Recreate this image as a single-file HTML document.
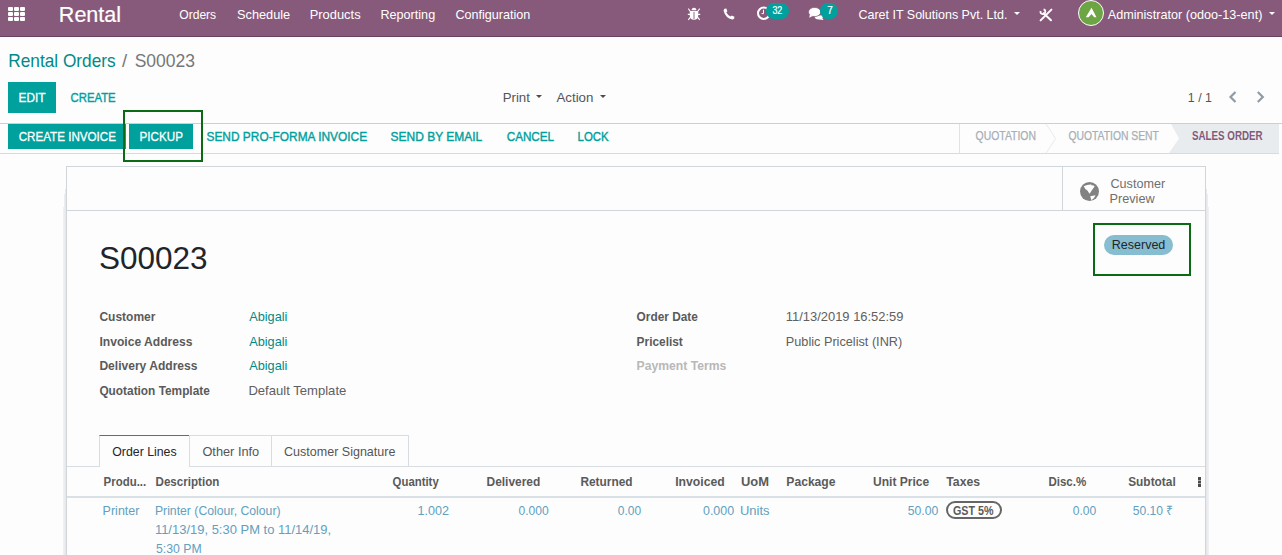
<!DOCTYPE html>
<html><head><meta charset="utf-8"><style>
html,body{margin:0;padding:0;width:1282px;height:555px;overflow:hidden;background:#fdfdfd;font-family:"Liberation Sans",sans-serif;position:relative}
.t{position:absolute;white-space:nowrap;transform-origin:0 0}
.r{position:absolute}
</style></head><body>
<!-- navbar -->
<div class="r" style="left:0;top:0;width:1282px;height:36px;background:#875A7B;border-bottom:1px solid #684260"></div>
<div class="r" style="left:8px;top:7px;width:5px;height:4px;background:#fff;border-radius:1px;box-shadow:6px 0 0 #fff,12px 0 0 #fff,0 5px 0 #fff,6px 5px 0 #fff,12px 5px 0 #fff,0 10px 0 #fff,6px 10px 0 #fff,12px 10px 0 #fff"></div>
<!-- bug icon -->
<svg class="r" style="left:687px;top:7px" width="14" height="14" viewBox="0 0 14 14">
 <path d="M4.6 3.3 Q4.6 0.7 7 0.7 Q9.4 0.7 9.4 3.3 Z" fill="#fff"/>
 <path d="M2.8 3.9 H11.2 V9 Q11.2 12.7 7 12.7 Q2.8 12.7 2.8 9 Z" fill="#fff"/>
 <rect x="6.55" y="4.8" width="0.9" height="7.2" fill="#875A7B"/>
 <path d="M0.8 7.4 H2.9 M11.1 7.4 H13.2 M1.3 1.6 L3.2 4.2 M12.7 1.6 L10.8 4.2 M1.3 12.8 L3.2 10.4 M12.7 12.8 L10.8 10.4" stroke="#fff" stroke-width="1.1"/>
</svg>
<!-- phone -->
<svg class="r" style="left:723px;top:8px" width="12" height="12" viewBox="0 0 12 12">
 <path d="M1.6 0.8 L3.3 0.6 L4.4 3.2 L3.3 4.2 Q4.6 7.2 7.7 8.6 L8.8 7.5 L11.4 8.7 L11.2 10.6 Q10.5 11.6 9.2 11.4 Q2.6 10 0.6 2.9 Q0.5 1.5 1.6 0.8 Z" fill="#fff"/>
</svg>
<!-- clock -->
<svg class="r" style="left:756px;top:5px" width="16" height="17" viewBox="0 0 16 17">
 <circle cx="7.75" cy="8.25" r="5.75" fill="none" stroke="#fff" stroke-width="2"/>
 <path d="M7.5 4.7 V8.6 H5.6" fill="none" stroke="#fff" stroke-width="1"/>
</svg>
<div class="r" style="left:766.2px;top:2.9px;width:23px;height:16px;border-radius:8px;background:#00A09D"></div>
<!-- chat -->
<svg class="r" style="left:806px;top:5px" width="20" height="17" viewBox="0 0 20 17">
 <path d="M8.8 11.5 Q8.5 14.3 13 14.5 Q16 14.6 17.6 14.9 L16.4 13.2 Q18 11.5 16.5 10 Z" fill="#fff"/>
 <ellipse cx="8.6" cy="7" rx="6.1" ry="4.6" fill="#fff" stroke="#875A7B" stroke-width="0.7"/>
 <path d="M3.8 9.6 L3.3 12.8 L7 10.8 Z" fill="#fff"/>
</svg>
<div class="r" style="left:820px;top:2.8px;width:18px;height:16.2px;border-radius:8.1px;background:#00A09D"></div>
<!-- carets navbar -->
<div class="r" style="left:1013.8px;top:12px;width:0;height:0;border-left:3px solid transparent;border-right:3px solid transparent;border-top:3px solid #fff"></div>
<div class="r" style="left:1269.2px;top:12.4px;width:0;height:0;border-left:3px solid transparent;border-right:3px solid transparent;border-top:3px solid #fff"></div>
<!-- tools -->
<svg class="r" style="left:1038px;top:7px" width="16" height="16" viewBox="0 0 16 16">
 <path d="M13.4 2.6 L2.6 13.4" stroke="#fff" stroke-width="2" stroke-linecap="round"/>
 <path d="M5.6 6.2 L13.0 13.2" stroke="#fff" stroke-width="2" stroke-linecap="round"/>
 <path d="M2.6 4.0 A2.4 2.4 0 1 0 5.6 2.4" fill="none" stroke="#fff" stroke-width="1.7"/>
</svg>
<!-- avatar -->
<div class="r" style="left:1078px;top:0.2px;width:24px;height:24px;border-radius:50%;background:#6da544;border:1px solid #fff"></div>
<svg class="r" style="left:1078px;top:0px" width="26" height="26" viewBox="0 0 26 26">
 <path d="M13.5 7.8 L18.5 17.2 L16.2 17.2 L13.5 13.9 L10.6 17.2 L7.8 17.2 Z" fill="#fff"/>
</svg>
<!-- control panel -->
<div class="r" style="left:8px;top:82px;width:48px;height:31px;background:#00A09D"></div>
<div class="r" style="left:535.8px;top:95px;width:0;height:0;border-left:3px solid transparent;border-right:3px solid transparent;border-top:3px solid #4c4c4c"></div>
<div class="r" style="left:600.3px;top:95px;width:0;height:0;border-left:3px solid transparent;border-right:3px solid transparent;border-top:3px solid #4c4c4c"></div>
<svg class="r" style="left:1226px;top:89px" width="42" height="16" viewBox="0 0 42 16">
 <path d="M9.5 3 L4.5 8 L9.5 13" fill="none" stroke="#8f9ba5" stroke-width="2.2"/>
 <path d="M31.8 3 L36.8 8 L31.8 13" fill="none" stroke="#8f9ba5" stroke-width="2.2"/>
</svg>
<!-- statusbar -->
<div class="r" style="left:0;top:123px;width:1282px;height:1px;background:#cfcfcf"></div>
<div class="r" style="left:0;top:153px;width:1279px;height:1px;background:#d6dbe0"></div>
<div class="r" style="left:8px;top:124px;width:118px;height:25px;background:#00A09D"></div>
<div class="r" style="left:129px;top:124px;width:64px;height:25px;background:#00A09D"></div>
<div class="r" style="left:959px;top:124px;width:1px;height:29px;background:#dde3e8"></div>
<svg class="r" style="left:1040px;top:124px" width="240" height="29" viewBox="0 0 240 29">
 <path d="M6 0 L15.7 14.5 L6 29" fill="none" stroke="#e6eaee" stroke-width="1"/>
 <path d="M131 0 L239 0 L239 29 L129 29 L139 14.5 Z" fill="#e9ecef"/>
</svg>
<!-- green highlight boxes -->
<div class="r" style="left:123px;top:110px;width:76px;height:48px;border:2px solid #0a6b12"></div>
<!-- form sheet -->
<div class="r" style="left:65px;top:189px;width:1px;height:370px;background:#e6e8eb"></div>
<div class="r" style="left:64px;top:194px;width:1px;height:370px;background:#eaecee"></div>
<div class="r" style="left:63px;top:207px;width:1px;height:370px;background:#eef0f1"></div>
<div class="r" style="left:1206px;top:189px;width:1px;height:370px;background:#e6e8eb"></div>
<div class="r" style="left:1207px;top:194px;width:1px;height:370px;background:#eaecee"></div>
<div class="r" style="left:1208px;top:207px;width:1px;height:370px;background:#eef0f1"></div>

<div class="r" style="left:66px;top:166px;width:1138px;height:400px;border:1px solid #d1d6db;background:#fdfdfd"></div>
<div class="r" style="left:67px;top:210px;width:1138px;height:1px;background:#d1d6db"></div>
<div class="r" style="left:1062px;top:167px;width:1px;height:43px;background:#d1d6db"></div>
<svg class="r" style="left:1079px;top:181px" width="21" height="21" viewBox="0 0 21 21">
 <circle cx="10.5" cy="10.5" r="9.5" fill="#828282"/>
 <path d="M4.8 5.2 Q8.5 3.2 12.2 3.4 L12.8 4.6 L14.2 4.2 L15.6 5.4 Q13.2 8.5 10.6 12.8 Q9.2 11 8.4 9.6 Q6 8.6 4.8 5.2 Z" fill="#fff"/>
 <path d="M11.2 15.2 L16.6 14.2 Q15.2 17.6 12.4 19.3 Z" fill="#fff"/>
</svg>
<div class="r" style="left:1104px;top:235px;width:69px;height:20px;border-radius:10px;background:#87bdd0"></div>
<div class="r" style="left:1093px;top:223px;width:94px;height:49px;border:2px solid #0a6b12"></div>
<!-- notebook -->
<div class="r" style="left:67px;top:466px;width:1138px;height:1px;background:#d8dde2"></div>
<div class="r" style="left:99px;top:435px;width:89px;height:31px;border-left:1px solid #d8dde2;border-right:1px solid #d8dde2;border-top:1px solid #875A7B;background:#fdfdfd"></div>
<div class="r" style="left:189px;top:435px;width:82px;height:31px;border:1px solid #d8dde2;border-bottom:none;border-left:none"></div>
<div class="r" style="left:272px;top:435px;width:136px;height:31px;border:1px solid #d8dde2;border-bottom:none;border-left:none"></div>
<div class="r" style="left:67px;top:496px;width:1138px;height:2px;background:#d9e0e6"></div>
<!-- GST pill -->
<div class="r" style="left:946.2px;top:500.9px;width:51.6px;height:13.8px;border:2px solid #666;border-radius:9px"></div>
<!-- kebab -->
<div class="r" style="left:1198px;top:477px;width:3px;height:3px;background:#4c4c4c;box-shadow:0 3.5px 0 #4c4c4c,0 7px 0 #4c4c4c"></div>

<div class="t" style="left:58.00px;top:4.00px;font-size:22px;line-height:22px;font-weight:400;color:#fff;letter-spacing:0.000px;transform:translateX(0.821px) scaleX(0.9790);-webkit-text-stroke:0.2px #fff;">Rental</div>
<div class="t" style="left:179.00px;top:8.00px;font-size:13px;line-height:13px;font-weight:400;color:#fff;letter-spacing:0.000px;transform:translateX(0.300px) scaleX(0.9275);">Orders</div>
<div class="t" style="left:237.00px;top:8.00px;font-size:13px;line-height:13px;font-weight:400;color:#fff;letter-spacing:0.000px;transform:translateX(0.000px) scaleX(0.9815);">Schedule</div>
<div class="t" style="left:309.00px;top:8.00px;font-size:13px;line-height:13px;font-weight:400;color:#fff;letter-spacing:0.000px;transform:translateX(0.708px) scaleX(0.9920);">Products</div>
<div class="t" style="left:380.00px;top:8.00px;font-size:13px;line-height:13px;font-weight:400;color:#fff;letter-spacing:0.000px;transform:translateX(0.429px) scaleX(0.9709);">Reporting</div>
<div class="t" style="left:455.00px;top:8.00px;font-size:13px;line-height:13px;font-weight:400;color:#fff;letter-spacing:0.000px;transform:translateX(0.400px) scaleX(0.9675);">Configuration</div>
<div class="t" style="left:858.00px;top:7.80px;font-size:13.5px;line-height:13.5px;font-weight:400;color:#fff;letter-spacing:0.000px;transform:translateX(0.500px) scaleX(0.9244);">Caret IT Solutions Pvt. Ltd.</div>
<div class="t" style="left:1107.00px;top:7.50px;font-size:13.5px;line-height:13.5px;font-weight:400;color:#fff;letter-spacing:0.000px;transform:translateX(0.700px) scaleX(0.9370);">Administrator (odoo-13-ent)</div>
<div class="t" style="left:772.00px;top:6.20px;font-size:10px;line-height:10px;font-weight:400;color:#fff;letter-spacing:0.000px;transform:translateX(0.400px) scaleX(0.8909);-webkit-text-stroke:0.2px #fff;">32</div>
<div class="t" style="left:827.20px;top:6.20px;font-size:10px;line-height:10px;font-weight:400;color:#fff;letter-spacing:0.000px;-webkit-text-stroke:0.2px #fff;">7</div>
<div class="t" style="left:8.00px;top:51.80px;font-size:18.5px;line-height:18.5px;font-weight:400;color:#008a87;letter-spacing:0.000px;transform:translateX(0.268px) scaleX(0.9325);">Rental Orders</div>
<div class="t" style="left:122.00px;top:51.80px;font-size:18.5px;line-height:18.5px;font-weight:400;color:#777777;letter-spacing:0.000px;">/</div>
<div class="t" style="left:134.00px;top:51.80px;font-size:18.5px;line-height:18.5px;font-weight:400;color:#777777;letter-spacing:0.000px;transform:translateX(0.654px) scaleX(0.9460);">S00023</div>
<div class="t" style="left:18.00px;top:91.00px;font-size:13.1px;line-height:13.1px;font-weight:400;color:#fff;letter-spacing:0.000px;transform:translateX(0.600px) scaleX(0.9033);-webkit-text-stroke:0.3px #fff;">EDIT</div>
<div class="t" style="left:70.00px;top:91.00px;font-size:13.1px;line-height:13.1px;font-weight:400;color:#00A09D;letter-spacing:0.000px;transform:translateX(0.500px) scaleX(0.8660);-webkit-text-stroke:0.4px #00A09D;">CREATE</div>
<div class="t" style="left:502.00px;top:90.70px;font-size:13.1px;line-height:13.1px;font-weight:400;color:#555555;letter-spacing:0.000px;transform:translateX(0.688px) scaleX(1.0115);">Print</div>
<div class="t" style="left:556.00px;top:90.70px;font-size:13.1px;line-height:13.1px;font-weight:400;color:#555555;letter-spacing:0.000px;transform:translateX(0.400px) scaleX(1.0167);">Action</div>
<div class="t" style="left:1187.00px;top:90.90px;font-size:13.1px;line-height:13.1px;font-weight:400;color:#555555;letter-spacing:0.000px;transform:translateX(0.854px) scaleX(0.9458);">1 / 1</div>
<div class="t" style="left:18.00px;top:129.90px;font-size:13.1px;line-height:13.1px;font-weight:400;color:#fff;letter-spacing:0.000px;transform:translateX(0.660px) scaleX(0.8876);-webkit-text-stroke:0.3px #fff;">CREATE INVOICE</div>
<div class="t" style="left:139.00px;top:129.90px;font-size:13.1px;line-height:13.1px;font-weight:400;color:#fff;letter-spacing:0.000px;transform:translateX(0.600px) scaleX(0.8878);-webkit-text-stroke:0.3px #fff;">PICKUP</div>
<div class="t" style="left:206.00px;top:129.90px;font-size:13.1px;line-height:13.1px;font-weight:400;color:#00A09D;letter-spacing:0.000px;transform:translateX(0.500px) scaleX(0.9085);-webkit-text-stroke:0.4px #00A09D;">SEND PRO-FORMA INVOICE</div>
<div class="t" style="left:390.00px;top:129.90px;font-size:13.1px;line-height:13.1px;font-weight:400;color:#00A09D;letter-spacing:0.000px;transform:translateX(0.600px) scaleX(0.9139);-webkit-text-stroke:0.4px #00A09D;">SEND BY EMAIL</div>
<div class="t" style="left:506.00px;top:129.90px;font-size:13.1px;line-height:13.1px;font-weight:400;color:#00A09D;letter-spacing:0.000px;transform:translateX(0.700px) scaleX(0.8925);-webkit-text-stroke:0.4px #00A09D;">CANCEL</div>
<div class="t" style="left:577.00px;top:129.90px;font-size:13.1px;line-height:13.1px;font-weight:400;color:#00A09D;letter-spacing:0.000px;transform:translateX(0.600px) scaleX(0.8722);-webkit-text-stroke:0.4px #00A09D;">LOCK</div>
<div class="t" style="left:975.00px;top:130.40px;font-size:12.4px;line-height:12.4px;font-weight:400;color:#a7aeb5;letter-spacing:0.000px;transform:translateX(0.600px) scaleX(0.8408);-webkit-text-stroke:0.25px #a7aeb5;">QUOTATION</div>
<div class="t" style="left:1068.00px;top:130.40px;font-size:12.4px;line-height:12.4px;font-weight:400;color:#a7aeb5;letter-spacing:0.000px;transform:translateX(0.400px) scaleX(0.8358);-webkit-text-stroke:0.25px #a7aeb5;">QUOTATION SENT</div>
<div class="t" style="left:1192.00px;top:130.40px;font-size:12.4px;line-height:12.4px;font-weight:700;color:#83597a;letter-spacing:0.000px;transform:translateX(0.000px) scaleX(0.7889);">SALES ORDER</div>
<div class="t" style="left:1110.00px;top:177.80px;font-size:12.2px;line-height:12.2px;font-weight:400;color:#6f6f6f;letter-spacing:0.000px;transform:translateX(0.500px) scaleX(1.0340);">Customer</div>
<div class="t" style="left:1109.00px;top:192.60px;font-size:12.2px;line-height:12.2px;font-weight:400;color:#6f6f6f;letter-spacing:0.000px;transform:translateX(0.458px) scaleX(1.0419);">Preview</div>
<div class="t" style="left:99.00px;top:241.80px;font-size:32px;line-height:32px;font-weight:400;color:#212529;letter-spacing:0.000px;transform:translateX(0.016px) scaleX(0.9843);">S00023</div>
<div class="t" style="left:1111.00px;top:238.00px;font-size:13.3px;line-height:13.3px;font-weight:400;color:#212529;letter-spacing:0.000px;transform:translateX(0.759px) scaleX(0.9411);">Reserved</div>
<div class="t" style="left:99.00px;top:311.00px;font-size:12.8px;line-height:12.8px;font-weight:700;color:#5a5a5a;letter-spacing:0.000px;transform:translateX(0.400px) scaleX(0.9383);">Customer</div>
<div class="t" style="left:99.00px;top:335.70px;font-size:12.8px;line-height:12.8px;font-weight:700;color:#5a5a5a;letter-spacing:0.000px;transform:translateX(0.400px) scaleX(0.9459);">Invoice Address</div>
<div class="t" style="left:99.00px;top:359.90px;font-size:12.8px;line-height:12.8px;font-weight:700;color:#5a5a5a;letter-spacing:0.000px;transform:translateX(0.400px) scaleX(0.9423);">Delivery Address</div>
<div class="t" style="left:99.00px;top:384.80px;font-size:12.8px;line-height:12.8px;font-weight:700;color:#5a5a5a;letter-spacing:0.000px;transform:translateX(0.400px) scaleX(0.9261);">Quotation Template</div>
<div class="t" style="left:249.00px;top:310.80px;font-size:12.8px;line-height:12.8px;font-weight:400;color:#008a87;letter-spacing:0.000px;transform:translateX(0.200px) scaleX(0.9947);">Abigali</div>
<div class="t" style="left:249.00px;top:335.70px;font-size:12.8px;line-height:12.8px;font-weight:400;color:#008a87;letter-spacing:0.000px;transform:translateX(0.200px) scaleX(0.9947);">Abigali</div>
<div class="t" style="left:249.00px;top:359.90px;font-size:12.8px;line-height:12.8px;font-weight:400;color:#008a87;letter-spacing:0.000px;transform:translateX(0.200px) scaleX(0.9947);">Abigali</div>
<div class="t" style="left:248.00px;top:384.80px;font-size:12.8px;line-height:12.8px;font-weight:400;color:#606060;letter-spacing:0.000px;transform:translateX(0.378px) scaleX(1.0221);">Default Template</div>
<div class="t" style="left:636.00px;top:311.00px;font-size:12.8px;line-height:12.8px;font-weight:700;color:#5a5a5a;letter-spacing:0.000px;transform:translateX(0.600px) scaleX(0.9258);">Order Date</div>
<div class="t" style="left:636.00px;top:336.00px;font-size:12.8px;line-height:12.8px;font-weight:700;color:#5a5a5a;letter-spacing:0.000px;transform:translateX(0.600px) scaleX(0.9280);">Pricelist</div>
<div class="t" style="left:636.00px;top:360.00px;font-size:12.8px;line-height:12.8px;font-weight:700;color:#b8b8b8;letter-spacing:0.000px;transform:translateX(0.600px) scaleX(0.9511);">Payment Terms</div>
<div class="t" style="left:785.00px;top:311.00px;font-size:12.8px;line-height:12.8px;font-weight:400;color:#606060;letter-spacing:0.000px;transform:translateX(0.790px) scaleX(1.0104);">11/13/2019 16:52:59</div>
<div class="t" style="left:785.00px;top:336.00px;font-size:12.8px;line-height:12.8px;font-weight:400;color:#606060;letter-spacing:0.000px;transform:translateX(0.808px) scaleX(0.9922);">Public Pricelist (INR)</div>
<div class="t" style="left:112.00px;top:445.90px;font-size:12.7px;line-height:12.7px;font-weight:400;color:#212529;letter-spacing:0.000px;transform:translateX(0.300px) scaleX(0.9697);">Order Lines</div>
<div class="t" style="left:202.00px;top:445.90px;font-size:12.7px;line-height:12.7px;font-weight:400;color:#555555;letter-spacing:0.000px;transform:translateX(0.400px) scaleX(1.0071);">Other Info</div>
<div class="t" style="left:284.00px;top:445.90px;font-size:12.7px;line-height:12.7px;font-weight:400;color:#555555;letter-spacing:0.000px;transform:translateX(0.000px) scaleX(0.9876);">Customer Signature</div>
<div class="t" style="left:103.00px;top:475.80px;font-size:12.7px;line-height:12.7px;font-weight:700;color:#5a5a5a;letter-spacing:0.000px;transform:translateX(0.600px) scaleX(0.9021);">Produ...</div>
<div class="t" style="left:155.00px;top:475.80px;font-size:12.7px;line-height:12.7px;font-weight:700;color:#5a5a5a;letter-spacing:0.000px;transform:translateX(0.500px) scaleX(0.9143);">Description</div>
<div class="t" style="left:392.00px;top:475.80px;font-size:12.7px;line-height:12.7px;font-weight:700;color:#5a5a5a;letter-spacing:0.000px;transform:translateX(0.600px) scaleX(0.8962);">Quantity</div>
<div class="t" style="left:486.00px;top:475.80px;font-size:12.7px;line-height:12.7px;font-weight:700;color:#5a5a5a;letter-spacing:0.000px;transform:translateX(0.500px) scaleX(0.9421);">Delivered</div>
<div class="t" style="left:580.00px;top:475.80px;font-size:12.7px;line-height:12.7px;font-weight:700;color:#5a5a5a;letter-spacing:0.000px;transform:translateX(0.400px) scaleX(0.9364);">Returned</div>
<div class="t" style="left:675.00px;top:475.80px;font-size:12.7px;line-height:12.7px;font-weight:700;color:#5a5a5a;letter-spacing:0.000px;transform:translateX(0.200px) scaleX(0.9608);">Invoiced</div>
<div class="t" style="left:741.00px;top:475.80px;font-size:12.7px;line-height:12.7px;font-weight:700;color:#5a5a5a;letter-spacing:0.000px;transform:translateX(0.000px) scaleX(1.0185);">UoM</div>
<div class="t" style="left:786.00px;top:475.80px;font-size:12.7px;line-height:12.7px;font-weight:700;color:#5a5a5a;letter-spacing:0.000px;transform:translateX(0.300px) scaleX(0.9558);">Package</div>
<div class="t" style="left:873.00px;top:475.80px;font-size:12.7px;line-height:12.7px;font-weight:700;color:#5a5a5a;letter-spacing:0.000px;transform:translateX(0.000px) scaleX(0.9492);">Unit Price</div>
<div class="t" style="left:946.00px;top:475.80px;font-size:12.7px;line-height:12.7px;font-weight:700;color:#5a5a5a;letter-spacing:0.000px;transform:translateX(0.300px) scaleX(0.9629);">Taxes</div>
<div class="t" style="left:1048.00px;top:475.80px;font-size:12.7px;line-height:12.7px;font-weight:700;color:#5a5a5a;letter-spacing:0.000px;transform:translateX(0.400px) scaleX(0.9095);">Disc.%</div>
<div class="t" style="left:1128.00px;top:475.80px;font-size:12.7px;line-height:12.7px;font-weight:700;color:#5a5a5a;letter-spacing:0.000px;transform:translateX(0.200px) scaleX(0.9360);">Subtotal</div>
<div class="t" style="left:102.00px;top:505.00px;font-size:12.8px;line-height:12.8px;font-weight:400;color:#62a0bd;letter-spacing:0.000px;transform:translateX(0.624px) scaleX(0.9757);">Printer</div>
<div class="t" style="left:154.00px;top:505.00px;font-size:12.8px;line-height:12.8px;font-weight:400;color:#62a0bd;letter-spacing:0.000px;transform:translateX(0.945px) scaleX(0.9546);">Printer (Colour, Colour)</div>
<div class="t" style="left:417.00px;top:505.00px;font-size:12.8px;line-height:12.8px;font-weight:400;color:#62a0bd;letter-spacing:0.000px;transform:translateX(0.516px) scaleX(0.9839);">1.002</div>
<div class="t" style="left:518.00px;top:505.00px;font-size:12.8px;line-height:12.8px;font-weight:400;color:#62a0bd;letter-spacing:0.000px;transform:translateX(0.500px) scaleX(0.9438);">0.000</div>
<div class="t" style="left:617.00px;top:505.00px;font-size:12.8px;line-height:12.8px;font-weight:400;color:#62a0bd;letter-spacing:0.000px;transform:translateX(0.800px) scaleX(0.9360);">0.00</div>
<div class="t" style="left:703.00px;top:505.00px;font-size:12.8px;line-height:12.8px;font-weight:400;color:#62a0bd;letter-spacing:0.000px;transform:translateX(0.000px) scaleX(0.9719);">0.000</div>
<div class="t" style="left:739.00px;top:505.00px;font-size:12.8px;line-height:12.8px;font-weight:400;color:#62a0bd;letter-spacing:0.000px;transform:translateX(0.986px) scaleX(1.0143);">Units</div>
<div class="t" style="left:907.00px;top:505.00px;font-size:12.8px;line-height:12.8px;font-weight:400;color:#62a0bd;letter-spacing:0.000px;transform:translateX(0.800px) scaleX(0.9531);">50.00</div>
<div class="t" style="left:1072.00px;top:505.00px;font-size:12.8px;line-height:12.8px;font-weight:400;color:#62a0bd;letter-spacing:0.000px;transform:translateX(0.700px) scaleX(0.9440);">0.00</div>
<div class="t" style="left:1132.00px;top:505.00px;font-size:12.8px;line-height:12.8px;font-weight:400;color:#62a0bd;letter-spacing:0.000px;transform:translateX(0.700px) scaleX(0.9442);">50.10 ₹</div>
<div class="t" style="left:154.00px;top:523.50px;font-size:12.8px;line-height:12.8px;font-weight:400;color:#62a0bd;letter-spacing:0.000px;transform:translateX(0.886px) scaleX(1.0140);">11/13/19, 5:30 PM to 11/14/19,</div>
<div class="t" style="left:155.00px;top:542.80px;font-size:12.8px;line-height:12.8px;font-weight:400;color:#62a0bd;letter-spacing:0.000px;transform:translateX(0.900px) scaleX(0.9596);">5:30 PM</div>
<div class="t" style="left:953.00px;top:504.50px;font-size:12px;line-height:12px;font-weight:700;color:#5a5a5a;letter-spacing:0.000px;transform:translateX(0.000px) scaleX(0.8913);">GST 5%</div>
</body></html>
